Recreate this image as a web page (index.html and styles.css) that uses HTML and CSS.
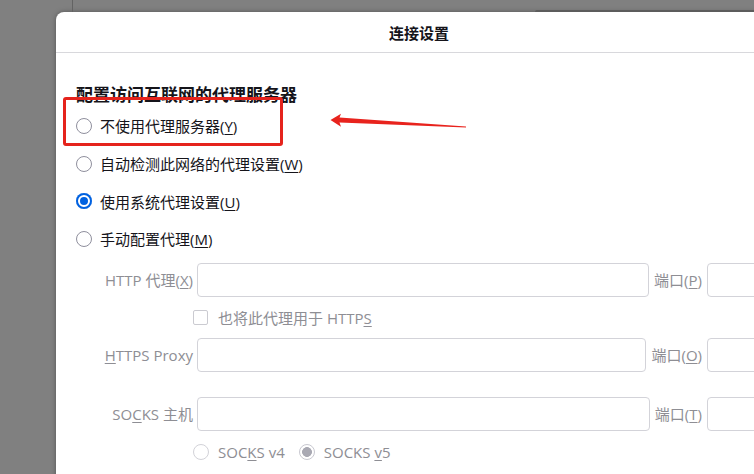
FILE: index.html
```html
<!DOCTYPE html>
<html lang="zh-CN">
<head>
<meta charset="utf-8">
<title>连接设置</title>
<link rel="stylesheet" href="styles.css">
</head>
<body>
<div class="backdrop-line"></div>
<div class="backdrop-edge"></div>

<div class="dialog">
  <div class="dialog-header">连接设置</div>
  <div class="dialog-body">
    <h2 class="section-title">配置访问互联网的代理服务器</h2>
    <div class="radio-list">
      <label class="radio-row"><span class="radio"></span><span>不使用代理服务器(<u>Y</u>)</span></label>
      <label class="radio-row"><span class="radio"></span><span>自动检测此网络的代理设置(<u>W</u>)</span></label>
      <label class="radio-row"><span class="radio radio-checked"></span><span>使用系统代理设置(<u>U</u>)</span></label>
      <label class="radio-row"><span class="radio"></span><span>手动配置代理(<u>M</u>)</span></label>
    </div>

    <div class="proxy-grid">
      <div class="field-row">
        <span class="field-label">HTTP 代理(<u>X</u>)</span>
        <span class="text-input grow"></span>
        <span class="port-label">端口(<u>P</u>)</span>
        <span class="text-input port"></span>
      </div>
      <div class="check-row">
        <span class="checkbox"></span>
        <span>也将此代理用于 HTTP<u>S</u></span>
      </div>
      <div class="field-row">
        <span class="field-label"><u>H</u>TTPS Proxy</span>
        <span class="text-input grow"></span>
        <span class="port-label">端口(<u>O</u>)</span>
        <span class="text-input port"></span>
      </div>
      <div class="field-row socks-row">
        <span class="field-label">SO<u>C</u>KS 主机</span>
        <span class="text-input grow"></span>
        <span class="port-label">端口(<u>T</u>)</span>
        <span class="text-input port"></span>
      </div>
      <div class="version-row">
        <label class="version-opt"><span class="radio radio-disabled"></span><span>SOC<u>K</u>S v4</span></label>
        <label class="version-opt"><span class="radio radio-disabled-checked"></span><span>SOCKS <u>v</u>5</span></label>
      </div>
    </div>
  </div>
</div>

<div class="annot-box"></div>
<svg class="annot-arrow" width="160" height="40" viewBox="0 0 160 40">
  <polygon points="10.5,20 21,13.8 19.5,17.6 146,26.4 146,27.6 19.5,22.6 21,26.8" fill="#e8231d"/>
</svg>
</body>
</html>
```

FILE: styles.css
```css
html, body {
  margin: 0;
  width: 754px;
  height: 474px;
  overflow: hidden;
}

body {
  position: relative;
  background: #808080;
  padding: 12px 0 0 56px;
  box-sizing: border-box;
  font-family: "Open Sans", "Noto Sans CJK SC", sans-serif;
  font-size: 15px;
  color: #15141a;
}

.backdrop-line {
  position: absolute;
  left: 72px;
  top: 0;
  width: 1px;
  height: 12px;
  background: #636363;
}

.backdrop-edge {
  position: absolute;
  left: 535px;
  right: 0;
  top: 10px;
  height: 2px;
  background: #5c5c5c;
  border-top-left-radius: 2px;
}

.dialog {
  width: 726px;
  height: 480px;
  background: #ffffff;
  border-radius: 8px 8px 0 0;
  box-shadow: 0 0 5px rgba(0, 0, 0, 0.35);
}

.dialog-header {
  height: 40px;
  border-bottom: 1px solid #d8d8dc;
  display: flex;
  align-items: center;
  justify-content: center;
  font-weight: bold;
  font-size: 15px;
}

.dialog-body {
  padding: 32px 20px 0 20px;
}

.section-title {
  margin: 0;
  font-size: 17px;
  line-height: 20px;
  font-weight: bold;
}

.radio-list {
  margin-top: 2px;
  display: flex;
  flex-direction: column;
}

.radio-row {
  height: 37.7px;
  display: flex;
  align-items: center;
  gap: 8px;
}

u {
  text-decoration: underline;
  text-underline-offset: 2px;
}

.radio {
  width: 16px;
  height: 16px;
  box-sizing: border-box;
  border-radius: 50%;
  border: 1px solid #8f8f9d;
  background: #ffffff;
  flex: none;
}

.radio-checked {
  border: none;
  background: #0061e0;
  box-shadow: inset 0 0 0 2px #0061e0, inset 0 0 0 4px #ffffff;
}

.radio-disabled {
  border-color: #d2d2d8;
}

.radio-disabled-checked {
  border: 1px solid #c8c8d0;
  background: radial-gradient(circle, #a9a9b3 0 4.6px, #ffffff 5.2px);
}

.proxy-grid {
  margin: 5px 0 0 24px;
  color: #8e8e94;
  display: flex;
  flex-direction: column;
}

.field-row {
  height: 34px;
  display: flex;
  align-items: center;
}

.field-label {
  width: 93px;
  flex: none;
  text-align: right;
  white-space: nowrap;
}

.text-input {
  height: 34px;
  box-sizing: border-box;
  border: 1px solid #d3d3d9;
  border-radius: 4px;
  background: #ffffff;
}

.grow {
  flex: 1;
  margin-left: 4px;
}

.port-label {
  margin: 0 5px;
  white-space: nowrap;
}

.port {
  width: 55px;
  flex: none;
}

.check-row {
  height: 41px;
  display: flex;
  align-items: center;
  gap: 10px;
  padding-left: 93px;
}

.checkbox {
  width: 15px;
  height: 15px;
  box-sizing: border-box;
  border: 1px solid #cbcbd1;
  border-radius: 2px;
}

.socks-row {
  margin-top: 25px;
}

.version-row {
  height: 42px;
  display: flex;
  align-items: center;
  padding-left: 93px;
  gap: 14px;
}

.version-opt {
  display: flex;
  align-items: center;
  gap: 9px;
}

.annot-box {
  position: absolute;
  left: 63px;
  top: 97px;
  width: 220px;
  height: 49px;
  box-sizing: border-box;
  border: 3px solid #e5231c;
  border-radius: 3px;
}

.annot-arrow {
  position: absolute;
  left: 320px;
  top: 100px;
}
```
